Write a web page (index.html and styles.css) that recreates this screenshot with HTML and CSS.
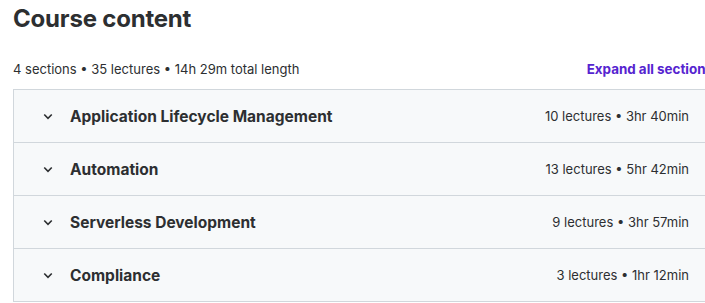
FILE: index.html
```html
<!DOCTYPE html>
<html lang="en">
<head>
    <meta charset="UTF-8">
    <title>Course content</title>
    <link rel="stylesheet" href="styles.css">
</head>
<body>

<div class="curriculum">
    <h2 class="title">Course content</h2>

    <div class="summary">
        <span class="summary-text">4 sections &bull; 35 lectures &bull; 14h 29m total length</span>
        <button class="expand-all">Expand all sections</button>
    </div>

    <div class="sections">
        <div class="section">
            <svg class="chevron" viewBox="0 0 24 24"><path d="M7 10l5 5 5-5"/></svg>
            <span class="section-title">Application Lifecycle Management</span>
            <span class="section-meta">10 lectures &bull; 3hr 40min</span>
        </div>
        <div class="section">
            <svg class="chevron" viewBox="0 0 24 24"><path d="M7 10l5 5 5-5"/></svg>
            <span class="section-title">Automation</span>
            <span class="section-meta">13 lectures &bull; 5hr 42min</span>
        </div>
        <div class="section">
            <svg class="chevron" viewBox="0 0 24 24"><path d="M7 10l5 5 5-5"/></svg>
            <span class="section-title">Serverless Development</span>
            <span class="section-meta">9 lectures &bull; 3hr 57min</span>
        </div>
        <div class="section">
            <svg class="chevron" viewBox="0 0 24 24"><path d="M7 10l5 5 5-5"/></svg>
            <span class="section-title">Compliance</span>
            <span class="section-meta">3 lectures &bull; 1hr 12min</span>
        </div>
    </div>
</div>

</body>
</html>
```

FILE: styles.css
```css
body {
    margin: 0;
    font-family: Inter, 'Noto Sans', Arial, sans-serif;
    color: #2d2f31;
    background-color: #fff;
    overflow: hidden;
}

.curriculum {
    width: 700px;
    padding-left: 13px;
}

.title {
    margin: 0;
    padding-top: 5px;
    font-size: 24px;
    font-weight: 700;
    line-height: 28px;
    letter-spacing: -0.2px;
}

.summary {
    display: flex;
    justify-content: space-between;
    align-items: center;
    margin-top: 24px;
    height: 24px;
    margin-bottom: 8px;
}

.summary-text {
    font-size: 13px;
}

.expand-all {
    background: none;
    border: none;
    padding: 0;
    font-family: inherit;
    font-size: 13.4px;
    font-weight: 700;
    color: #5624d0;
    white-space: nowrap;
}

.sections {
    border: 1px solid #d1d7dc;
}

.section {
    display: flex;
    align-items: center;
    height: 52px;
    padding: 0 23px 0 25px;
    background-color: #f7f9fa;
    border-top: 1px solid #d1d7dc;
}

.section:first-child {
    border-top: none;
}

.chevron {
    width: 18px;
    height: 18px;
    fill: none;
    stroke: #2d2f31;
    stroke-width: 2.2;
    margin-right: 13px;
}

.section-title {
    flex: 1;
    font-size: 15.5px;
    font-weight: 700;
}

.section-meta {
    font-size: 13px;
}
```
